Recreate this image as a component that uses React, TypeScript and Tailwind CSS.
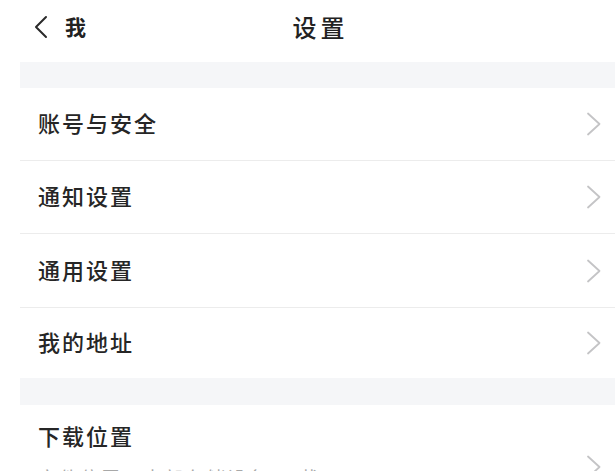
import React from "react";

const font = { fontFamily: '"Noto Sans CJK SC", "Noto Sans", sans-serif' };

const Chevron: React.FC = () => (
  <svg width="16" height="24" viewBox="0 0 16 24" fill="none" className="shrink-0">
    <path d="M2 1.5 L13.5 12 L2 22.5" stroke="#c4c4c6" strokeWidth="1.8" strokeLinejoin="round" strokeLinecap="round" />
  </svg>
);

interface RowProps {
  label: string;
  height: string;
  border?: boolean;
}

const Row: React.FC<RowProps> = ({ label, height, border = true }) => (
  <div className={`flex items-center justify-between pl-[18px] pr-[13px] ${height} ${border ? "border-b border-[#ececec]" : ""}`}>
    <span className="-mt-[3px] text-[22px] tracking-[2px] font-medium text-[#262626]">{label}</span>
    <Chevron />
  </div>
);

export default function App() {
  return (
    <div className="h-[471px] w-full overflow-hidden bg-white pl-[20px]" style={font}>
      {/* header */}
      <div className="grid h-[62px] grid-cols-[1fr_auto_1fr] items-center">
        <div className="flex items-center gap-[16px] pl-[13px] pb-[8px]">
          <svg width="16" height="24" viewBox="0 0 16 24" fill="none">
            <path d="M13 2 L3 12 L13 22" stroke="#2a2a2a" strokeWidth="2" strokeLinecap="round" strokeLinejoin="round" />
          </svg>
          <span className="text-[21px] font-bold text-[#222]">我</span>
        </div>
        <span className="pl-[6px] pb-[8px] text-[24px] tracking-[4px] font-medium text-[#222]">设置</span>
        <div />
      </div>

      <div className="h-[26px] bg-[#f5f6f8]" />

      <Row label="账号与安全" height="h-[73px]" />
      <Row label="通知设置" height="h-[73px]" />
      <Row label="通用设置" height="h-[74px]" />
      <Row label="我的地址" height="h-[70px]" border={false} />

      <div className="h-[27px] bg-[#f5f6f8]" />

      <div className="flex items-center justify-between pl-[18px] pr-[13px] pt-[15px]">
        <div className="flex flex-col">
          <span className="text-[22px] tracking-[2px] font-medium text-[#262626] leading-[30px]">下载位置</span>
          <span className="mt-[15px] text-[19px] tracking-[2px] text-[#a8a8a8] leading-[26px]">文件位置：内部存储设备/下载</span>
        </div>
        <div className="pt-[22px]">
          <Chevron />
        </div>
      </div>
    </div>
  );
}
